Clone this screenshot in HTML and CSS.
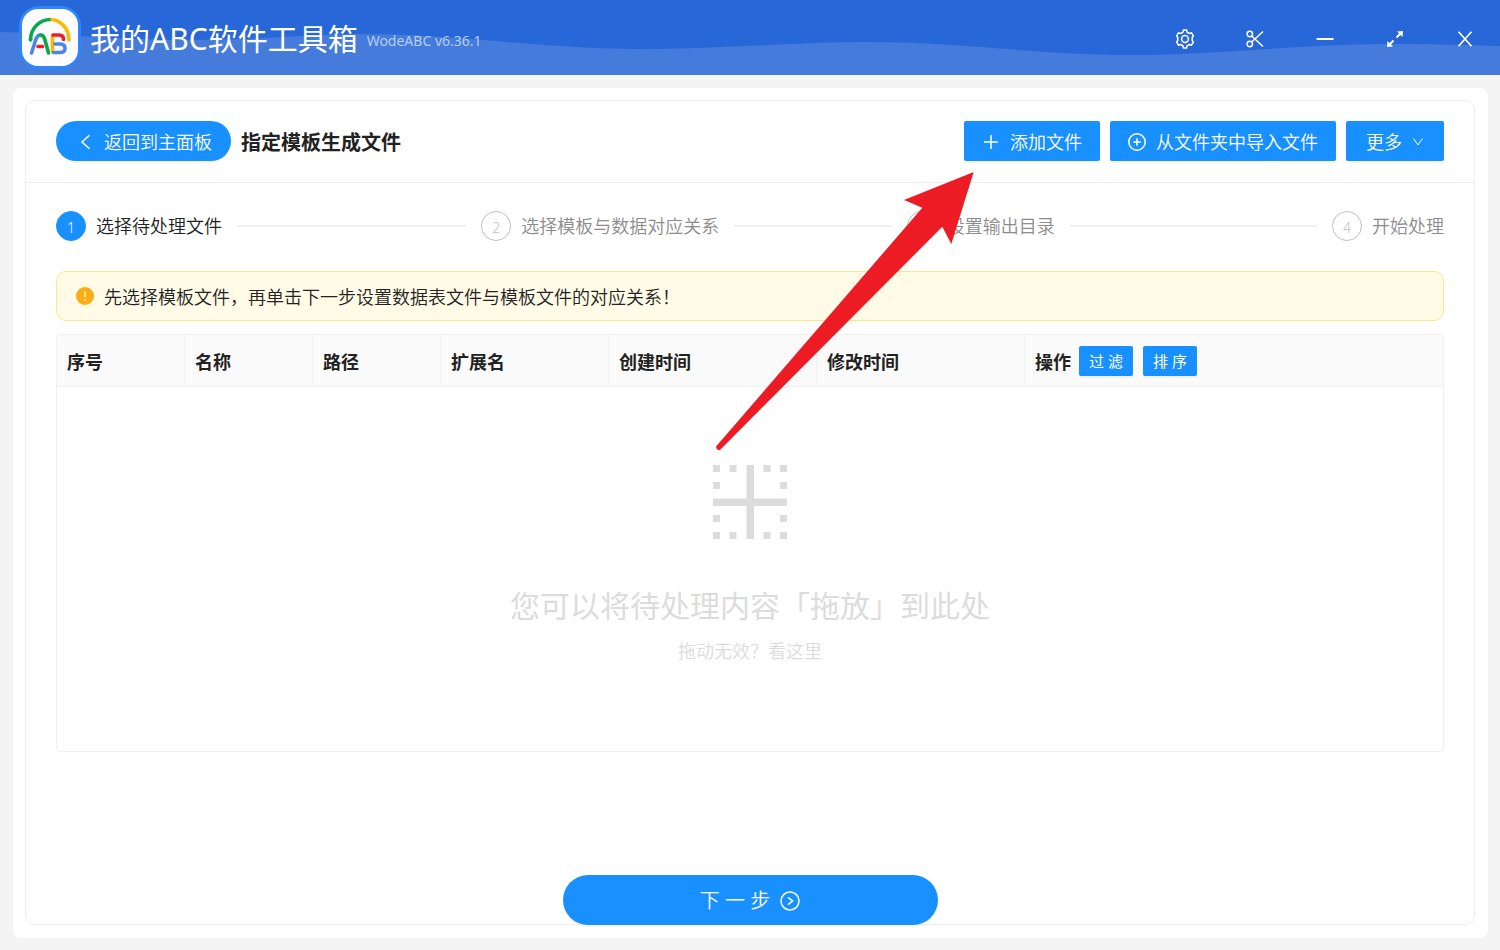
FILE: index.html
```html
<!DOCTYPE html>
<html lang="zh-CN">
<head>
<meta charset="utf-8">
<meta name="viewport" content="width=device-width, initial-scale=1">
<title>我的ABC软件工具箱</title>
<link rel="stylesheet" href="styles.css">
</head>
<body>
<header class="titlebar">
  <svg class="wave" viewBox="0 0 1500 75" preserveAspectRatio="none" aria-hidden="true">
    <path d="M0 32C60 33 110 40 190 40C260 40 310 34 365 34C460 34 540 49 640 49C720 49 800 42 870 42C960 42 1040 55 1130 55C1220 55 1300 44 1385 44C1430 44 1470 45 1500 46V75H0Z"/>
  </svg>
  <svg class="logo" viewBox="0 0 62 63" aria-hidden="true">
    <rect width="62" height="63" rx="20" fill="#2f86fb"/>
    <rect x="3" y="3" width="56" height="57" rx="16" fill="#fdfdff"/>
    <g fill="none" stroke-width="3.6" stroke-linecap="round" stroke-linejoin="round">
      <path d="M50 34C50 22 41 13.500 31 13.500" stroke="#fcb900"/>
      <path d="M11.500 34C11.500 22 21 13.500 31.500 13.500" stroke="#0aa84c" stroke-linecap="butt"/>
      <path d="M11.500 34V33" stroke="#0aa84c"/>
      <path d="M12.500 47L17 33Q18.500 29 21.500 29" stroke="#4a86e8"/>
      <path d="M21.500 29Q24.500 29 25.700 33L29.500 47" stroke="#0aa84c"/>
      <path d="M19 40.500H23.500" stroke="#f21d26"/>
      <path d="M33.500 30V46" stroke="#fcb900"/>
      <path d="M34 29H40Q44.500 29 44.500 33.500" stroke="#f21d26"/>
      <path d="M36 38H41Q46 38 46 42.200Q46 46.500 41 46.500H34.500" stroke="#4a86e8"/>
    </g>
  </svg>
  <h1 class="app-name">我的ABC软件工具箱</h1>
  <span class="version">WodeABC v6.36.1</span>
  <nav class="window-tools" aria-label="窗口">
    <button class="tool" type="button" aria-label="设置">
      <svg viewBox="0 0 20 20"><path d="M7.900 3.200L8.500 1H11.500L12.100 3.200L14.200 4.400L16.500 3.900L18.300 6.700L17.200 8.800V11.200L18.300 13.300L16.500 16.100L14.200 15.600L12.100 16.800L11.500 19H8.500L7.900 16.800L5.800 15.600L3.500 16.100L1.700 13.300L2.800 11.200V8.800L1.700 6.700L3.500 3.900L5.800 4.400Z"/><circle cx="10" cy="10" r="3.400"/></svg>
    </button>
    <button class="tool" type="button" aria-label="截图">
      <svg viewBox="0 0 20 20"><circle cx="4.800" cy="5" r="2.700"/><circle cx="4.800" cy="15" r="2.700"/><path d="M6.700 7L18 17.500M6.700 13L18 2.500"/></svg>
    </button>
    <button class="tool" type="button" aria-label="最小化">
      <svg viewBox="0 0 20 20"><path d="M1.500 10H18.500" stroke-width="2"/></svg>
    </button>
    <button class="tool" type="button" aria-label="最大化">
      <svg viewBox="0 0 20 20"><path d="M11.500 8.500L16 4M8.500 11.500L4 16" stroke-width="2"/><path class="solid" d="M12 2.500L18 2L17.500 8ZM8 17.500L2 18L2.500 12Z"/></svg>
    </button>
    <button class="tool" type="button" aria-label="关闭">
      <svg viewBox="0 0 20 20"><path d="M3.500 2.800L16.500 17.200M16.500 2.800L3.500 17.200" stroke-width="1.700"/></svg>
    </button>
  </nav>
</header>

<main class="shell">
  <section class="panel">
    <div class="panel-head">
      <button class="btn btn-back" type="button">
        <svg viewBox="0 0 18 18"><path d="M13.500 2.200L6 9L13.500 15.800"/></svg>
        返回到主面板
      </button>
      <h2 class="page-title">指定模板生成文件</h2>
      <div class="actions">
        <button class="btn" type="button">
          <svg viewBox="0 0 18 18"><path d="M9 2V16M2 9H16"/></svg>
          添加文件
        </button>
        <button class="btn" type="button">
          <svg viewBox="0 0 18 18"><circle cx="9" cy="9" r="8.200"/><path d="M9 5.200V12.800M5.200 9H12.800"/></svg>
          从文件夹中导入文件
        </button>
        <button class="btn btn-more" type="button">
          更多
          <svg viewBox="0 0 12 12"><path d="M1.500 2.500L6 9L10.500 2.500"/></svg>
        </button>
      </div>
    </div>

    <div class="panel-body">
      <ol class="steps">
        <li class="step current"><span class="num">1</span><span class="label">选择待处理文件</span></li>
        <li class="step"><span class="num">2</span><span class="label">选择模板与数据对应关系</span></li>
        <li class="step"><span class="num">3</span><span class="label">设置输出目录</span></li>
        <li class="step"><span class="num">4</span><span class="label">开始处理</span></li>
      </ol>

      <div class="notice" role="note">
        <svg viewBox="0 0 18 18" aria-hidden="true"><circle cx="9" cy="9" r="9" fill="#faad14"/><path d="M9 4.500V10" stroke="#fff3cf" stroke-width="1.500"/><circle cx="9" cy="12.800" r="1" fill="#fff3cf"/></svg>
        <span>先选择模板文件，再单击下一步设置数据表文件与模板文件的对应关系！</span>
      </div>

      <div class="file-list">
        <table class="files">
          <thead>
            <tr>
              <th class="c-s">序号</th>
              <th class="c-s">名称</th>
              <th class="c-s">路径</th>
              <th class="c-m">扩展名</th>
              <th class="c-l">创建时间</th>
              <th class="c-l">修改时间</th>
              <th><div class="ops"><span>操作</span><span class="mini-group"><button class="mini" type="button">过 滤</button><button class="mini" type="button">排 序</button></span></div></th>
            </tr>
          </thead>
        </table>
        <div class="drop">
          <svg viewBox="0 0 74 74" aria-hidden="true">
            <path d="M33.500 0H41V33.500H74V41H41V74H33.500V41H0V33.500H33.500ZM0 0H7V7H0ZM16.500 0H23.500V7H16.500ZM50.500 0H57.500V7H50.500ZM67 0H74V7H67ZM0 17H7V24H0ZM67 17H74V24H67ZM0 50H7V57H0ZM67 50H74V57H67ZM0 67H7V74H0ZM16.500 67H23.500V74H16.500ZM50.500 67H57.500V74H50.500ZM67 67H74V74H67Z"/>
          </svg>
          <p class="drop-title">您可以将待处理内容「拖放」到此处</p>
          <a class="drop-help" href="#">拖动无效？看这里</a>
        </div>
      </div>

      <button class="btn btn-next" type="button">下 一 步
        <svg viewBox="0 0 20 20"><circle cx="10" cy="10" r="9"/><path d="M8 6.300L12.600 10L8 13.700"/></svg>
      </button>
    </div>
  </section>
</main>

<svg class="pointer" viewBox="0 0 258 278" aria-hidden="true">
  <path d="M257.700 0L188 28L206.300 35.700L0.900 273.500A2.600 2.600 0 0 0 5 277L226.300 54.700L235.300 72Z"/>
</svg>
</body>
</html>
```
FILE: styles.css
```css
* {
  box-sizing: border-box;
}

body {
  margin: 0;
  min-height: 100vh;
  display: flex;
  flex-direction: column;
  position: relative;
  background: #f4f4f4;
  color: #222;
  font-family: "Noto Sans", "Noto Sans CJK SC", sans-serif;
  font-size: 18px;
  font-weight: 350;
  line-height: 28px;
}

button {
  font: inherit;
  border: 0;
  cursor: pointer;
}

svg {
  display: block;
  flex: none;
}

.titlebar {
  position: relative;
  display: flex;
  align-items: center;
  height: 75px;
  padding: 0 15px 0 19px;
  background: #2867d7;
  color: #fff;
}

.wave {
  position: absolute;
  inset: 0;
  width: 100%;
  height: 100%;
  fill: #457bdb;
}

.logo {
  position: relative;
  width: 62px;
  height: 63px;
}

.app-name {
  position: relative;
  margin: 0 9px;
  padding-top: 3px;
  font-size: 30px;
  font-weight: 400;
  line-height: 40px;
}

.version {
  position: relative;
  padding-top: 7px;
  font-size: 14px;
  font-weight: 400;
  line-height: 24px;
  color: #b7cdf2;
}

.window-tools {
  position: relative;
  display: flex;
  gap: 30px;
  margin-left: auto;
  padding-top: 3px;
}

.tool {
  display: grid;
  place-items: center;
  width: 40px;
  height: 40px;
  padding: 0;
  background: none;
  color: #fff;
}

.tool svg {
  width: 20px;
  height: 20px;
  fill: none;
  stroke: currentColor;
  stroke-width: 1.5;
}

.tool .solid {
  fill: currentColor;
  stroke: none;
}

.shell {
  flex: 1;
  display: flex;
  margin: 13px 12px 12px 13px;
  padding: 12px 13px 13px 12px;
  border-radius: 8px;
  background: #fff;
}

.panel {
  flex: 1;
  display: flex;
  flex-direction: column;
  border: 1px solid #eee;
  border-radius: 10px;
}

.panel-head {
  display: flex;
  align-items: center;
  gap: 10px;
  padding: 20px 30px 21px;
  border-bottom: 1px solid #eee;
}

.btn {
  display: flex;
  align-items: center;
  justify-content: center;
  gap: 10px;
  height: 40px;
  padding: 2px 18px 0;
  border-radius: 2px;
  background: #1890ff;
  color: #fff;
  box-shadow: 0 2px 0 rgba(0, 0, 0, 0.04);
}

.btn svg {
  width: 18px;
  height: 18px;
  fill: none;
  stroke: currentColor;
  stroke-width: 1.5;
}

.btn-back {
  border-radius: 20px;
  padding: 2px 19px 0 20px;
}

.page-title {
  margin: 0;
  padding-top: 4px;
  font-size: 20px;
  font-weight: 700;
  line-height: 30px;
}

.actions {
  display: flex;
  gap: 10px;
  margin-left: auto;
}

.btn-more {
  padding: 2px 20px 0;
}

.btn-more svg {
  width: 12px;
  height: 12px;
  stroke-width: 1;
}

.panel-body {
  flex: 1;
  display: flex;
  flex-direction: column;
  padding: 28px 30px 0;
}

.steps {
  display: flex;
  gap: 15px;
  margin: 0 0 30px;
  padding: 0;
  list-style: none;
  color: #8c8c8c;
}

.step {
  flex: 1;
  display: flex;
  align-items: center;
  white-space: nowrap;
}

.step::after {
  content: "";
  flex: 1;
  height: 2px;
  margin-left: 15px;
  background: #f0f0f0;
}

.step:last-child {
  flex: none;
}

.step:last-child::after {
  display: none;
}

.num {
  display: grid;
  place-items: center;
  width: 30px;
  height: 30px;
  margin-right: 10px;
  padding-top: 2px;
  border: 1px solid #bfbfbf;
  border-radius: 50%;
  color: #bfbfbf;
  font-size: 14px;
}

.current {
  color: #222;
}

.current .num {
  border-color: #1890ff;
  background: #1890ff;
  color: #fff;
}

.notice {
  display: flex;
  align-items: center;
  gap: 10px;
  margin-bottom: 13px;
  padding: 10px 19px;
  border: 1px solid #ffe58f;
  border-radius: 10px;
  background: #fffbe6;
}

.notice span {
  padding-top: 2px;
  line-height: 26px;
}

.notice svg {
  width: 18px;
  height: 18px;
}

.file-list {
  flex: 1;
  display: flex;
  flex-direction: column;
  max-height: 418px;
  border: 1px solid #f0f0f0;
  border-radius: 4px;
  overflow: hidden;
}

.files {
  width: 100%;
  table-layout: fixed;
  border-collapse: separate;
  border-spacing: 0;
  background: #fafafa;
}

.files th {
  height: 52px;
  padding: 2px 10px 0;
  border-bottom: 1px solid #f0f0f0;
  border-right: 1px solid #f0f0f0;
  text-align: left;
  font-weight: 700;
}

.files th:last-child {
  border-right: 0;
}

.c-s {
  width: 128px;
}

.c-m {
  width: 168px;
}

.c-l {
  width: 208px;
}

.ops {
  display: flex;
  align-items: center;
  gap: 8px;
}

.mini-group {
  display: flex;
  gap: 10px;
  padding-bottom: 2px;
}

.mini {
  width: 54px;
  height: 30px;
  padding: 0;
  border-radius: 2px;
  background: #1890ff;
  color: #fff;
  font-size: 15px;
  font-weight: 400;
  box-shadow: 0 2px 0 rgba(0, 0, 0, 0.04);
}

.drop {
  flex: 1;
  display: flex;
  flex-direction: column;
  align-items: center;
  padding-top: 78px;
  color: #dcdcdc;
}

.drop svg {
  width: 74px;
  height: 74px;
  fill: currentColor;
}

.drop-title {
  margin: 44px 0 8px;
  font-size: 30px;
  font-weight: 400;
  line-height: 46px;
}

.drop-help {
  color: inherit;
  text-decoration: none;
}

.btn-next {
  width: 375px;
  height: 50px;
  margin: auto auto -1px;
  border-radius: 25px;
  font-size: 20px;
}

.btn-next svg {
  width: 20px;
  height: 20px;
}

/* Hint arrow aimed at the add-file button */
.pointer {
  position: absolute;
  top: 172px;
  right: 526px;
  width: 258px;
  height: 278px;
  fill: #ed1c24;
  pointer-events: none;
}
```
